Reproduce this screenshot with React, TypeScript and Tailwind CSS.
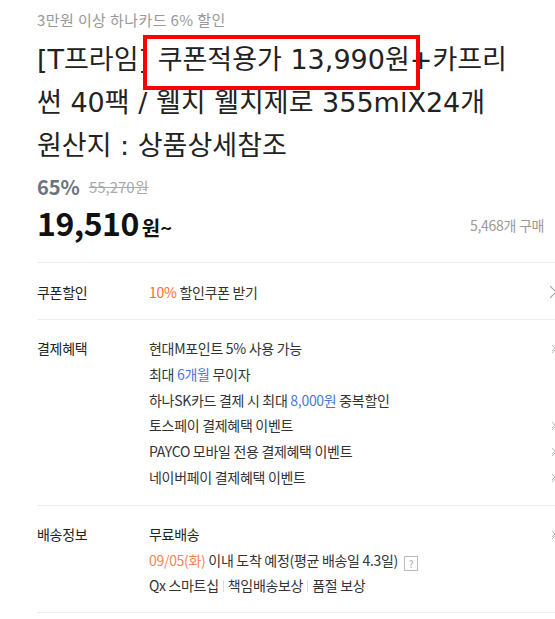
import React from "react";

const font = { fontFamily: '"Noto Sans CJK KR", "Noto Sans", sans-serif' };
const titleFont = { fontFamily: '"DejaVu Sans", "Noto Sans CJK KR", sans-serif' };

const ChevronRight = () => (
  <svg width="8" height="14" viewBox="0 0 8 14" className="shrink-0">
    <path d="M1 1l6 6-6 6" fill="none" stroke="#aaaaaa" strokeWidth="1.2" />
  </svg>
);

const ChevronSmall = () => (
  <svg width="8" height="10" viewBox="0 0 8 10" className="shrink-0">
    <path d="M3 1l3 3-3 3" fill="none" stroke="#b8b8b8" strokeWidth="1" />
    <path d="M6 6l-3 3" fill="none" stroke="#b8b8b8" strokeWidth="1" />
  </svg>
);

const Line = ({ children, arrow }: { children: React.ReactNode; arrow?: boolean }) => (
  <div className="flex items-center justify-between leading-[25.8px]">
    <div className="whitespace-nowrap">{children}</div>
    {arrow && <ChevronSmall />}
  </div>
);

const Bar = () => <span className="mx-[4px] inline-block h-[12px] w-px bg-[#dddddd] align-[-1px]" />;

export default function App() {
  return (
    <div className="h-[619px] w-[555px] overflow-hidden bg-white" style={font}>
      <div className="relative ml-[37px] w-[520px]">
        <div className="mt-[10px] text-[15px] leading-[20px] tracking-[0.4px] text-[#999999] whitespace-nowrap">
          3만원 이상 하나카드 6% 할인
        </div>

        <div className="mt-[8px] text-[27px] leading-[43px] font-normal text-[#222222] whitespace-nowrap" style={titleFont}>
          <div>[T프라임] 쿠폰적용가 13,990원+카프리</div>
          <div>썬 40팩 / 웰치 웰치제로 355mlX24개</div>
          <div>원산지 : 상품상세참조</div>
        </div>

        <div className="absolute left-[106px] top-[25px] h-[55px] w-[277px] border-[4px] border-[#ff0000]" />

        <div className="mt-[8px] flex items-end gap-[9px] leading-[24px]">
          <span className="text-[20px] font-bold text-[#6c737c]">65%</span>
          <span className="text-[15px] text-[#aaaaaa] line-through">55,270원</span>
        </div>

        <div className="mt-[5px] flex items-center justify-between">
          <div className="flex items-baseline leading-[36px] text-[#111111]">
            <span className="text-[32px] font-bold tracking-[-0.5px]">19,510</span>
            <span className="ml-[3px] text-[20px] font-bold">원~</span>
          </div>
          <span className="w-[87px] shrink-0 text-[14px] tracking-[-0.3px] text-[#999999] whitespace-nowrap">5,468개 구매</span>
        </div>

        <div className="mt-[16px] border-t border-[#eeeeee]" />

        <div className="flex pt-[16px] pb-[14px] text-[14px] tracking-[-0.3px] text-[#333333]">
          <div className="w-[112px] shrink-0 leading-[26px] text-[#222222]">쿠폰할인</div>
          <div className="flex flex-1 items-center justify-between leading-[26px]">
            <div>
              <span className="text-[#ff6c2c]">10%</span> 할인쿠폰 받기
            </div>
            <ChevronRight />
          </div>
        </div>

        <div className="border-t border-[#eeeeee]" />

        <div className="flex pt-[16px] pb-[14px] text-[14px] tracking-[-0.3px] text-[#333333]">
          <div className="w-[112px] shrink-0 leading-[25.8px] text-[#222222]">결제혜택</div>
          <div className="flex-1">
            <Line arrow>현대M포인트 5% 사용 가능</Line>
            <Line>
              최대 <span className="text-[#4a78d6]">6개월</span> 무이자
            </Line>
            <Line>
              하나SK카드 결제 시 최대 <span className="text-[#4a78d6]">8,000원</span> 중복할인
            </Line>
            <Line arrow>토스페이 결제혜택 이벤트</Line>
            <Line arrow>PAYCO 모바일 전용 결제혜택 이벤트</Line>
            <Line arrow>네이버페이 결제혜택 이벤트</Line>
          </div>
        </div>

        <div className="border-t border-[#eeeeee]" />

        <div className="flex pt-[16px] pb-[13px] text-[14px] tracking-[-0.3px] text-[#333333]">
          <div className="w-[112px] shrink-0 leading-[25.8px] text-[#222222]">배송정보</div>
          <div className="flex-1">
            <Line arrow>
              <span className="text-[#222222]">무료배송</span>
            </Line>
            <Line>
              <span className="text-[#fa7f5a]">09/05(화)</span> 이내 도착 예정(평균 배송일 4.3일)
              <span className="ml-[6px] inline-flex h-[15px] w-[14px] items-center justify-center border border-[#bbbbbb] align-[-2px] text-[10px] leading-none text-[#aaaaaa]">
                ?
              </span>
            </Line>
            <Line>
              Qx 스마트십
              <Bar />
              책임배송보상
              <Bar />
              품절 보상
            </Line>
          </div>
        </div>

        <div className="border-t border-[#eeeeee]" />
      </div>
    </div>
  );
}
